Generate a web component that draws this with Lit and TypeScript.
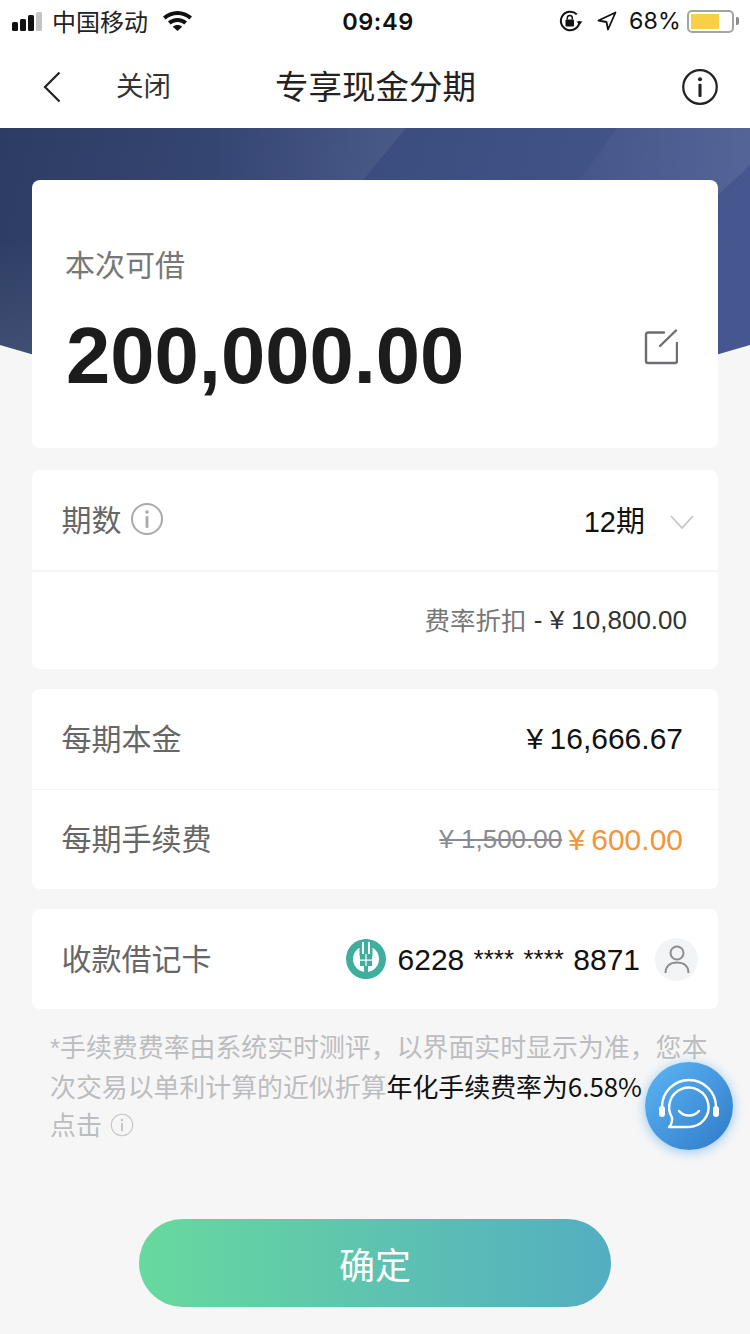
import { LitElement, html, css, svg } from "lit";
import { customElement } from "lit/decorators.js";

const infoIcon = (size: number, color: string, stroke: number) => html`
  <svg width=${size} height=${size} viewBox="0 0 34 34" fill="none">
    <circle cx="17" cy="17" r=${16 - stroke / 2} stroke=${color} stroke-width=${stroke}></circle>
    <circle cx="17" cy="10" r="1.8" fill=${color}></circle>
    <rect x="15.6" y="14" width="2.8" height="12" rx="1" fill=${color}></rect>
  </svg>
`;

const bannerArt = svg`
  <defs>
    <linearGradient id="bg" x1="0" y1="0" x2="1" y2="0.1">
      <stop offset="0" stop-color="#2d3c62"></stop>
      <stop offset="0.5" stop-color="#3b4c7e"></stop>
      <stop offset="1" stop-color="#46578f"></stop>
    </linearGradient>
    <linearGradient id="f1" x1="0" y1="0" x2="1" y2="0">
      <stop offset="0" stop-color="#fff" stop-opacity="0"></stop>
      <stop offset="1" stop-color="#fff" stop-opacity="0.07"></stop>
    </linearGradient>
    <linearGradient id="f2" x1="0" y1="0" x2="1" y2="0">
      <stop offset="0" stop-color="#fff" stop-opacity="0.02"></stop>
      <stop offset="1" stop-color="#fff" stop-opacity="0.08"></stop>
    </linearGradient>
    <linearGradient id="f3" x1="0" y1="0" x2="0" y2="1">
      <stop offset="0" stop-color="#fff" stop-opacity="0"></stop>
      <stop offset="1" stop-color="#fff" stop-opacity="0.08"></stop>
    </linearGradient>
  </defs>
  <path d="M0 0H750V217Q375 331 0 217Z" fill="url(#bg)"></path>
  <path d="M210 0H406L330 92H210Z" fill="url(#f1)"></path>
  <path d="M617 0H750V37L718 67H569Z" fill="url(#f2)"></path>
  <path d="M0 110H70L32 227L0 217Z" fill="url(#f3)"></path>
`;

@customElement("app-root")
export class AppRoot extends LitElement {
  static styles = css`
    :host {
      display: block;
      width: 750px;
      height: 1334px;
      position: relative;
      overflow: hidden;
      background: #f6f6f6;
      font-family: "Liberation Sans", "Noto Sans CJK SC", sans-serif;
      color: #111;
    }

    .cjk {
      font-family: "Noto Sans CJK SC", sans-serif;
    }

    .top {
      background: #fff;
      height: 128px;
    }

    .status {
      height: 42px;
      padding: 0 11px 0 12px;
      display: grid;
      grid-template-columns: 1fr auto 1fr;
      align-items: center;
    }

    .status-left,
    .status-right {
      display: flex;
      align-items: center;
    }

    .status-right {
      justify-content: flex-end;
    }

    .signal {
      display: flex;
      align-items: flex-end;
      gap: 2px;
      height: 20px;
      margin-right: 10px;
    }

    .signal i {
      display: block;
      width: 6px;
      background: #111;
      border-radius: 1.5px;
    }

    .carrier {
      font-size: 24px;
      line-height: 32px;
      margin-right: 15px;
      color: #222;
    }

    .time {
      font-family: Inter, sans-serif;
      font-size: 23.5px;
      font-weight: 600;
      letter-spacing: 0.6px;
      margin-left: 5px;
    }

    .percent {
      font-family: Inter, sans-serif;
      font-size: 23.2px;
      margin: 0 6px 0 12px;
      letter-spacing: 0.2px;
    }

    .battery {
      width: 47px;
      height: 23px;
      box-sizing: border-box;
      border: 2px solid #a4a4a4;
      border-radius: 5px;
      padding: 2px;
    }

    .battery i {
      display: block;
      width: 28px;
      height: 15px;
      background: #f9cf47;
    }

    .nub {
      width: 3px;
      height: 8px;
      background: #8c8c8c;
      border-radius: 0 2px 2px 0;
      margin-left: 2px;
    }

    .nav {
      height: 86px;
      box-sizing: border-box;
      padding: 3px 31px 0 43px;
      display: flex;
      align-items: center;
    }

    .close {
      font-size: 27.5px;
      color: #333;
      margin-left: 55px;
      padding-bottom: 5px;
    }

    .title {
      flex: 1;
      text-align: center;
      font-size: 33.5px;
      color: #222;
      margin-left: 3px;
      padding: 0 104px 5px 0;
    }

    .banner {
      position: absolute;
      left: 0;
      top: 128px;
      display: block;
    }

    .content {
      position: relative;
      padding: 52px 32px 0;
      display: flex;
      flex-direction: column;
    }

    .card {
      background: #fff;
      border-radius: 8px;
    }

    .amount-card {
      height: 268px;
      box-sizing: border-box;
      padding: 60px 40px 0 34px;
    }

    .amount-label {
      font-size: 30px;
      line-height: 46px;
      color: #777;
      margin-left: -1px;
    }

    .amount-row {
      display: flex;
      justify-content: space-between;
      align-items: center;
      margin-top: 22px;
    }

    .amount {
      font-size: 79.6px;
      line-height: 96px;
      font-weight: 700;
      color: #1c1c1c;
    }

    .edit {
      margin-bottom: 18px;
    }

    .row {
      height: 100px;
      box-sizing: border-box;
      padding: 0 30px;
      display: flex;
      align-items: center;
      justify-content: space-between;
    }

    .row + .row {
      border-top: 1px solid #f4f4f4;
    }

    .label {
      font-size: 30px;
      color: #666;
      display: flex;
      align-items: center;
      gap: 8px;
      margin-left: -0.5px;
      padding-bottom: 5px;
    }

    .label svg {
      margin-top: 3px;
    }

    .value {
      font-size: 30px;
      color: #111;
      display: flex;
      align-items: center;
    }

    .term {
      margin-top: 22px;
      border-radius: 8px 8px 2px 2px;
      padding-right: 24px;
    }

    .term .value {
      font-size: 29px;
      gap: 25px;
    }

    .term-text {
      padding-bottom: 3px;
    }

    .chevron {
      margin-top: 4px;
    }

    .discount {
      margin-top: 1px;
      height: 98px;
      border-radius: 2px 2px 8px 8px;
      justify-content: flex-end;
      padding: 0 31px 0 0;
      font-size: 26px;
      color: #333;
      white-space: pre;
    }

    .discount .cjk {
      color: #777;
      font-size: 25.5px;
      padding-bottom: 4px;
    }

    .fees {
      margin-top: 20px;
    }

    .fees .row {
      padding-right: 35px;
    }

    .principal {
      word-spacing: -2px;
    }

    .old {
      font-size: 26px;
      color: #888c92;
      text-decoration: line-through;
      margin-right: 6px;
    }

    .now {
      color: #f3953a;
      word-spacing: -2px;
    }

    .bank {
      margin-top: 20px;
    }

    .bank.row {
      padding-right: 20px;
    }

    .bank .value {
      gap: 12px;
    }

    .card-no {
      padding-top: 2px;
      word-spacing: 1px;
    }

    .stars {
      font-size: 26px;
      vertical-align: 2px;
    }

    .avatar {
      width: 43px;
      height: 43px;
      border-radius: 50%;
      background: #f3f4f6;
      display: flex;
      align-items: center;
      justify-content: center;
      margin-left: 3px;
    }

    .note {
      margin: 18px 0 0 18px;
      font-size: 25.9px;
      line-height: 38px;
      color: #bcbdc0;
      white-space: nowrap;
    }

    .note .mark {
      font-family: "Liberation Sans", sans-serif;
    }

    .note b {
      font-weight: 400;
      color: #111;
    }

    .note svg {
      vertical-align: -2px;
      margin-left: 2px;
    }

    .confirm {
      align-self: center;
      margin-top: 76px;
      width: 472px;
      height: 88px;
      border: 0;
      border-radius: 44px;
      background: linear-gradient(90deg, #68d99e, #53aec1);
      color: #fff;
      font-size: 36px;
      font-family: "Noto Sans CJK SC", sans-serif;
    }

    .service {
      position: absolute;
      left: 645px;
      top: 1062px;
      width: 88px;
      height: 88px;
      border-radius: 50%;
      background: linear-gradient(135deg, #5cb6f5, #2f7ac8);
      box-shadow: 0 2px 12px rgba(70, 160, 240, 0.55);
    }

    .service svg {
      display: block;
    }
  `;

  render() {
    return html`
      <div class="top">
        <div class="status">
          <div class="status-left">
            <div class="signal">
              <i style="height:9px"></i><i style="height:12px"></i><i style="height:16px"></i
              ><i style="height:19px;background:#c4c4c4"></i>
            </div>
            <span class="carrier cjk">中国移动</span>
            <svg width="29" height="20" viewBox="0 0 29 20" fill="#111">
              <path d="M14.5 0C9 0 4 2.1 0 5.6l2.6 2.9C5.8 5.7 10 4 14.5 4s8.7 1.7 11.9 4.5L29 5.6C25 2.1 20 0 14.5 0z"></path>
              <path d="M14.5 7c-3.6 0-6.9 1.3-9.500 3.500l2.700 3C9.500 12 11.900 11 14.500 11s5 1 6.800 2.500l2.700-3C21.400 8.300 18.100 7 14.500 7z"></path>
              <path d="M14.500 14c-1.800 0-3.400 .6-4.700 1.700l4.700 4.300 4.700-4.300C17.900 14.600 16.300 14 14.500 14z"></path>
            </svg>
          </div>
          <div class="time">09:49</div>
          <div class="status-right">
            <svg width="24" height="22" viewBox="0 0 24 22" fill="none">
              <path d="M20.500 11a9.300 9.300 0 1 1-2.700-6.600" stroke="#111" stroke-width="2"></path>
              <path d="M17.500 11.500h6l-3 3.500z" fill="#111"></path>
              <rect x="6.500" y="9.500" width="8.500" height="7" rx="1" fill="#111"></rect>
              <path d="M8.300 9.500V8a2.500 2.500 0 0 1 5 0v1.500" stroke="#111" stroke-width="1.500"></path>
            </svg>
            <svg style="margin-left:14px" width="20" height="20" viewBox="0 0 20 20" fill="none">
              <path d="M18.500 1.500L1.500 9.500l8 1.500 1.500 7.500z" stroke="#111" stroke-width="1.800" stroke-linejoin="round"></path>
            </svg>
            <span class="percent">68%</span>
            <div class="battery"><i></i></div>
            <div class="nub"></div>
          </div>
        </div>
        <div class="nav">
          <svg width="18" height="32" viewBox="0 0 18 32" fill="none">
            <path d="M16.500 1.500L2 16l14.500 14.500" stroke="#222" stroke-width="2.200"></path>
          </svg>
          <span class="close cjk">关闭</span>
          <span class="title cjk">专享现金分期</span>
          ${infoIcon(38, "#222", 2)}
        </div>
      </div>

      <svg class="banner" width="750" height="280" viewBox="0 0 750 280">${bannerArt}</svg>

      <div class="content">
        <section class="card amount-card">
          <div class="amount-label cjk">本次可借</div>
          <div class="amount-row">
            <span class="amount">200,000.00</span>
            <svg class="edit" width="34" height="36" viewBox="0 0 34 36" fill="none">
              <path d="M20 3.500H4a2 2 0 0 0-2 2V32a2 2 0 0 0 2 2h27a2 2 0 0 0 2-2V14" stroke="#6b6e73" stroke-width="2.400" stroke-linecap="round"></path>
              <path d="M16 17L32 1.500" stroke="#6b6e73" stroke-width="2.400" stroke-linecap="round"></path>
            </svg>
          </div>
        </section>

        <section class="card row term">
          <span class="label cjk">期数 ${infoIcon(34, "#a9a9a9", 2)}</span>
          <span class="value">
            <span class="term-text">12<span class="cjk">期</span></span>
            <svg class="chevron" width="24" height="14" viewBox="0 0 24 14" fill="none">
              <path d="M1 1l11 12L23 1" stroke="#c6c6c6" stroke-width="1.800"></path>
            </svg>
          </span>
        </section>
        <section class="card row discount"><span class="cjk">费率折扣</span> - ¥ 10,800.00</section>

        <section class="card fees">
          <div class="row">
            <span class="label cjk">每期本金</span>
            <span class="value principal">¥ 16,666.67</span>
          </div>
          <div class="row">
            <span class="label cjk">每期手续费</span>
            <span class="value"><span class="old">¥ 1,500.00</span><span class="now">¥ 600.00</span></span>
          </div>
        </section>

        <section class="card row bank">
          <span class="label cjk">收款借记卡</span>
          <span class="value">
            <svg width="40" height="40" viewBox="0 0 40 40">
              <circle cx="20" cy="20" r="20" fill="#3fae9c"></circle>
              <circle cx="20" cy="20" r="13" fill="#fff"></circle>
              <path d="M18 0h4v40h-4z" fill="#3fae9c"></path>
              <path d="M13.500 3H16v12h8V3h2.500v14h-13z" fill="#3fae9c"></path>
              <path d="M16 3h2v12h4V3h2v13H16z" fill="#fff"></path>
              <path d="M14 15h12v12H14z" fill="#3fae9c"></path>
              <path d="M14 20.500h12v1.300H14zM19.400 15h1.200v12h-1.200z" fill="#fff"></path>
            </svg>
            <span class="card-no">6228 <span class="stars">****</span> <span class="stars">****</span> 8871</span>
            <span class="avatar">
              <svg width="26" height="30" viewBox="0 0 26 30" fill="none">
                <circle cx="13" cy="9" r="6.500" stroke="#8e8e8e" stroke-width="2"></circle>
                <path d="M1.500 29c0-7 5-10.500 11.500-10.500S24.500 22 24.500 29" stroke="#8e8e8e" stroke-width="2"></path>
              </svg>
            </span>
          </span>
        </section>

        <div class="note cjk">
          <span class="mark">*</span>手续费费率由系统实时测评，以界面实时显示为准，您本<br />次交易以单利计算的近似折算<b>年化手续费率为6.58%</b><br />点击 ${infoIcon(24, "#c6c7ca", 1.6)}
        </div>

        <button class="confirm">确定</button>
      </div>

      <div class="service">
        <svg width="88" height="88" viewBox="0 0 88 88" fill="none">
          <path d="M17 47V45a27 27 0 0 1 54 0v2" stroke="#fff" stroke-width="2.400"></path>
          <rect x="14" y="44" width="6" height="11" rx="3" fill="#fff"></rect>
          <rect x="68" y="44" width="6" height="11" rx="3" fill="#fff"></rect>
          <path d="M44 65H24C26 63 27.500 60 27 55.500A19.700 19.700 0 1 1 44 65z" stroke="#fff" stroke-width="2.400" stroke-linejoin="round"></path>
          <path d="M34 49c5 6 15 6 20 0" stroke="#fff" stroke-width="2.400" stroke-linecap="round"></path>
        </svg>
      </div>
    `;
  }
}

declare global {
  interface HTMLElementTagNameMap {
    "app-root": AppRoot;
  }
}
